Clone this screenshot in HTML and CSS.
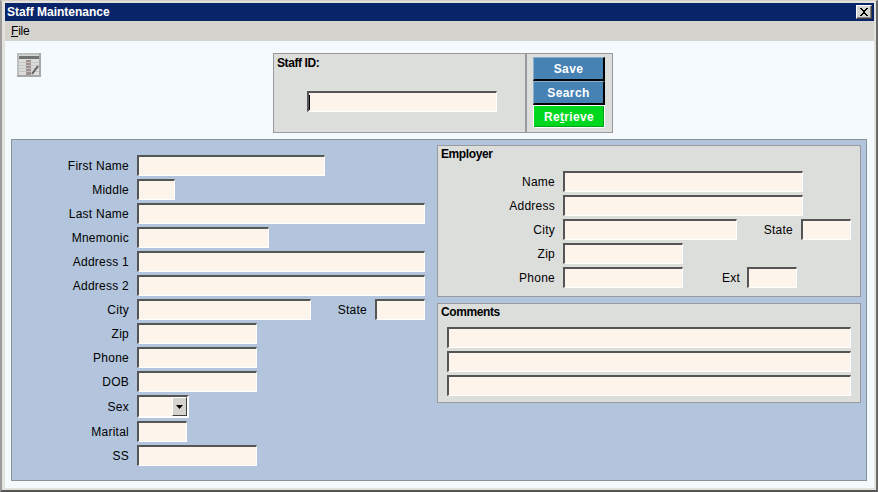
FILE: index.html
```html
<!DOCTYPE html>
<html lang="en">
<head>
<meta charset="utf-8">
<title>Staff Maintenance</title>
<link rel="stylesheet" href="styles.css">
</head>
<body>
<div class="window">
  <div class="titlebar">
    <span class="title-text">Staff Maintenance</span>
    <button class="close" type="button" aria-label="Close">
      <svg width="10" height="8" viewBox="0 0 10 8"><path d="M1 0h2v1h1v1h2V1h1V0h2v1H8v1H7v1H6v2h1v1h1v1h1v1H7V7H6V6H4v1H3v1H1V7h1V6h1V5h1V3H3V2H2V1H1z" fill="#000"/></svg>
    </button>
  </div>
  <div class="menubar"><span class="menu-item"><u>F</u>ile</span></div>
  <div class="content">
    <div class="toolbar">
      <svg class="app-icon" width="24" height="24" viewBox="0 0 24 24">
        <rect width="24" height="24" fill="#bcc0c0"/>
        <path d="M24 24H0v-2h22V0h2z" fill="#a4a8a8"/>
        <rect x="2" y="2" width="20" height="1" fill="#d8d8d8"/>
        <rect x="2" y="3" width="20" height="3" fill="#6e7272"/>
        <rect x="2" y="6" width="20" height="16" fill="#dcdcda"/>
        <path d="M2 9.5h20M2 12.5h20M2 15.5h20M2 18.5h20" stroke="#c6c6c6"/>
        <rect x="9" y="7" width="5" height="15" fill="#9c918e"/>
        <path d="M9 9.5h5M9 12.5h5M9 15.5h5M9 18.5h5" stroke="#c4bcb8"/>
        <path d="M15 21l6-8" stroke="#5e6262" stroke-width="2" fill="none"/>
      </svg>
      <div class="staff-group">
        <div class="staff-box">
          <div class="box-title">Staff ID:</div>
          <div class="field staff-field"><span class="caret"></span></div>
        </div>
        <div class="button-box">
          <button class="action blue" type="button">Save</button>
          <button class="action blue" type="button">Search</button>
          <button class="action green" type="button">Re<u>t</u>rieve</button>
        </div>
      </div>
    </div>
    <div class="main-panel">
      <div class="person">
        <div class="row"><label class="lbl">First Name</label><input class="field w188"></div>
        <div class="row"><label class="lbl">Middle</label><input class="field w38"></div>
        <div class="row"><label class="lbl">Last Name</label><input class="field w288"></div>
        <div class="row"><label class="lbl">Mnemonic</label><input class="field w132"></div>
        <div class="row"><label class="lbl">Address 1</label><input class="field w288"></div>
        <div class="row"><label class="lbl">Address 2</label><input class="field w288"></div>
        <div class="row"><label class="lbl">City</label><input class="field w174"><label class="lbl-inline">State</label><input class="field w50"></div>
        <div class="row"><label class="lbl">Zip</label><input class="field w120"></div>
        <div class="row"><label class="lbl">Phone</label><input class="field w120"></div>
        <div class="row"><label class="lbl">DOB</label><input class="field w120"></div>
        <div class="row row-tall"><label class="lbl">Sex</label>
          <div class="field combo"><span class="combo-btn"><svg width="7" height="4" viewBox="0 0 7 4"><path d="M0 0h7L3.5 4z" fill="#000"/></svg></span></div>
        </div>
        <div class="row"><label class="lbl">Marital</label><input class="field w50"></div>
        <div class="row"><label class="lbl">SS</label><input class="field w120"></div>
      </div>
      <div class="side">
        <div class="group employer">
          <div class="box-title">Employer</div>
          <div class="group-rows">
            <div class="row"><label class="lbl">Name</label><input class="field w240"></div>
            <div class="row"><label class="lbl">Address</label><input class="field w240"></div>
            <div class="row"><label class="lbl">City</label><input class="field w174"><label class="lbl-inline">State</label><input class="field w50"></div>
            <div class="row"><label class="lbl">Zip</label><input class="field w120"></div>
            <div class="row"><label class="lbl">Phone</label><input class="field w120"><label class="lbl-inline lbl-ext">Ext</label><input class="field w50"></div>
          </div>
        </div>
        <div class="group comments">
          <div class="box-title">Comments</div>
          <div class="comment-rows">
            <input class="field w404">
            <input class="field w404">
            <input class="field w404">
          </div>
        </div>
      </div>
    </div>
  </div>
</div>
</body>
</html>
```

FILE: styles.css
```css
* { box-sizing: border-box; }
html, body { margin: 0; padding: 0; }
body { font-family: "Liberation Sans", Arial, sans-serif; font-size: 12px; color: #000; }

.window {
  width: 878px;
  height: 492px;
  display: flex;
  flex-direction: column;
  padding: 2px 2px 2px 3px;
  background: #e4e2dc;
  border-style: solid;
  border-width: 1px 2px 2px 2px;
  border-color: #d4d0c8 #6a6a6a #555 #9c9c9c;
  overflow: hidden;
}

.titlebar {
  height: 18px;
  flex: none;
  display: flex;
  align-items: center;
  justify-content: space-between;
  padding: 0 2px 0 2px;
  background: #0a246a;
  color: #fff;
}
.title-text { font-weight: bold; font-size: 12px; letter-spacing: 0; }
.close {
  width: 16px;
  height: 14px;
  padding: 0;
  display: flex;
  align-items: center;
  justify-content: center;
  background: #d4d3cd;
  border: 1px solid;
  border-color: #fff #404040 #404040 #fff;
  box-shadow: inset -1px -1px 0 #808080;
}
.close svg { display: block; }

.menubar {
  height: 20px;
  flex: none;
  display: flex;
  align-items: center;
  padding-left: 6px;
  background: #d4d3cd;
}
.menu-item { font-size: 12px; letter-spacing: -0.2px; }

.content {
  flex: 1;
  display: flex;
  flex-direction: column;
  gap: 6px;
  padding: 12px 7px 7px 6px;
  background: #f4fafd;
}

.toolbar { display: flex; align-items: flex-start; height: 80px; flex: none; padding-left: 6px; }
.app-icon { display: block; flex: none; }
.staff-group { display: flex; margin-left: 232px; height: 80px; }

.staff-box {
  width: 252px;
  height: 80px;
  background: #dcdedc;
  border: 1px solid #9a9a9e;
  border-right: 0;
  padding: 2px 3px;
}
.box-title { font-weight: bold; font-size: 12px; line-height: 14px; letter-spacing: -0.4px; }
.staff-field {
  width: 190px;
  height: 21px;
  margin: 21px 0 0 30px;
  display: flex;
  align-items: center;
  padding-left: 1px;
}
.caret { width: 1px; height: 15px; background: #000; }

.button-box {
  width: 88px;
  height: 80px;
  background: #dcdedc;
  border: 1px solid #9a9a9e;
  border-left-width: 2px;
  padding: 3px 0 0 6px;
  display: flex;
  flex-direction: column;
  align-items: flex-start;
}
.action {
  width: 72px;
  height: 24px;
  padding: 0;
  font: bold 12px "Liberation Sans", Arial, sans-serif;
  letter-spacing: 0.4px;
  color: #fff;
  border: 1px solid;
}
.blue {
  background: #4682b4;
  border-color: #87aecd #000 #000 #87aecd;
  border-width: 1px 2px 2px 1px;
}
.green {
  height: 23px;
  background: #00d820;
  border-color: #fff;
  border-width: 1px;
  box-shadow: inset -1px -1px 0 #00a018;
  letter-spacing: 0.3px;
}

.main-panel {
  flex: 1;
  display: flex;
  background: #b2c5dc;
  border: 1px solid #8a929c;
  padding: 5px 5px 0 0;
}
.person { width: 413px; padding: 10px 0 0 1px; flex: none; }
.side { margin-left: 12px; width: 424px; display: flex; flex-direction: column; gap: 6px; }

.row { display: flex; align-items: center; height: 21px; margin-bottom: 3px; }
.row-tall { height: 23px; }
.lbl {
  width: 116px;
  margin-right: 8px;
  text-align: right;
  flex: none;
  letter-spacing: 0.25px;
}
.lbl-inline {
  width: 56px;
  margin-right: 8px;
  text-align: right;
  flex: none;
  letter-spacing: 0.25px;
}
.lbl-ext { width: 57px; margin-right: 7px; }

.field {
  height: 21px;
  padding: 0;
  flex: none;
  background: #fdf5ec;
  border-style: solid;
  border-width: 2px 1px 1px 2px;
  border-color: #555 #fff #fff #555;
  border-radius: 0;
  outline: 0;
  display: block;
}
.staff-field { display: flex; }
.w38 { width: 38px; }
.w50 { width: 50px; }
.w120 { width: 120px; }
.w132 { width: 132px; }
.w174 { width: 174px; }
.w188 { width: 188px; }
.w240 { width: 240px; }
.w288 { width: 288px; }
.w404 { width: 404px; }

.combo {
  width: 52px;
  height: 23px;
  display: flex;
  justify-content: flex-end;
  border-width: 2px;
}
.combo-btn {
  width: 15px;
  height: 19px;
  display: flex;
  align-items: center;
  justify-content: center;
  background: #d4d3cd;
  border: 1px solid;
  border-color: #fff #404040 #404040 #fff;
}
.combo-btn svg { display: block; }

.group {
  background: #dcdedc;
  border: 1px solid #9a9a9e;
  padding-top: 1px;
}
.group .box-title { padding-left: 3px; }
.employer { height: 152px; }
.comments { height: 100px; }
.group-rows { margin-top: 10px; padding-left: 1px; }
.comment-rows {
  display: flex;
  flex-direction: column;
  gap: 3px;
  margin: 8px 0 0 9px;
}
```
